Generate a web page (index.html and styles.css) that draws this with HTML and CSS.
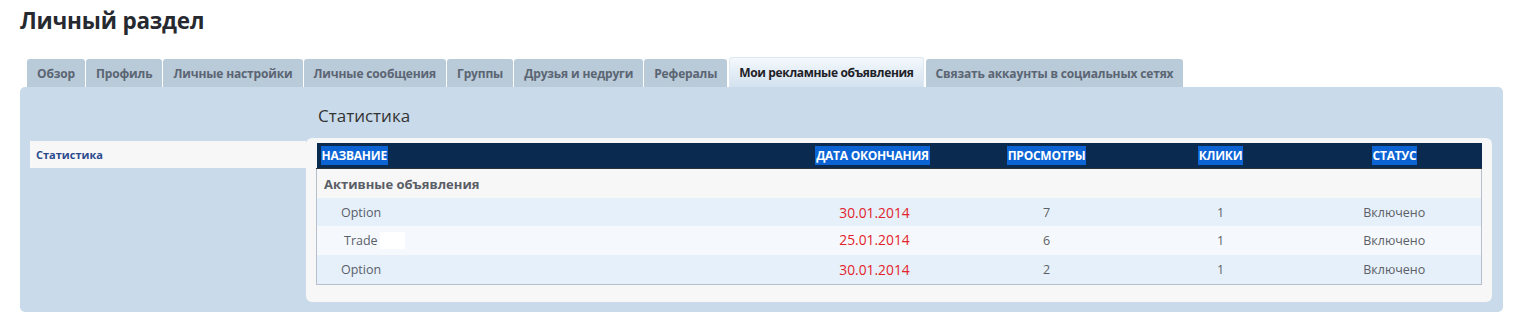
FILE: index.html
```html
<!DOCTYPE html>
<html lang="ru">
<head>
  <meta charset="UTF-8" />
  <title>Личный раздел</title>
  <link rel="stylesheet" href="styles.css">
</head>
<body>
  <h1 class="page-title">Личный раздел</h1>

  <ul class="tabs">
    <li class="tab">Обзор</li>
    <li class="tab">Профиль</li>
    <li class="tab">Личные настройки</li>
    <li class="tab">Личные сообщения</li>
    <li class="tab">Группы</li>
    <li class="tab">Друзья и недруги</li>
    <li class="tab">Рефералы</li>
    <li class="tab active">Мои рекламные объявления</li>
    <li class="tab">Связать аккаунты в социальных сетях</li>
  </ul>

  <div class="panel">
    <div class="sidebar">
      <div class="side-item">Статистика</div>
    </div>

    <div class="main">
      <h2 class="section-title">Статистика</h2>
      <div class="card">
        <table class="stats">
          <colgroup>
            <col class="c-name">
            <col class="c-date">
            <col class="c-num">
            <col class="c-num">
            <col class="c-num">
          </colgroup>
          <thead>
            <tr>
              <th class="left"><span class="sel">НАЗВАНИЕ</span></th>
              <th><span class="sel">ДАТА ОКОНЧАНИЯ</span></th>
              <th><span class="sel">ПРОСМОТРЫ</span></th>
              <th><span class="sel">КЛИКИ</span></th>
              <th><span class="sel">СТАТУС</span></th>
            </tr>
          </thead>
          <tbody>
            <tr class="group">
              <td colspan="5">Активные объявления</td>
            </tr>
            <tr class="odd short">
              <td class="name">Option</td>
              <td class="date">30.01.2014</td>
              <td>7</td>
              <td>1</td>
              <td>Включено</td>
            </tr>
            <tr class="even">
              <td class="name trade">Trade<span class="blank"></span></td>
              <td class="date up">25.01.2014</td>
              <td>6</td>
              <td>1</td>
              <td>Включено</td>
            </tr>
            <tr class="odd">
              <td class="name">Option</td>
              <td class="date">30.01.2014</td>
              <td>2</td>
              <td>1</td>
              <td>Включено</td>
            </tr>
          </tbody>
        </table>
      </div>
    </div>
  </div>
</body>
</html>
```

FILE: styles.css
```css
body {
  margin: 0;
  padding: 0 16px 0 20px;
  background: #ffffff;
  font-family: 'Open Sans', sans-serif;
  color: #555;
}

.page-title {
  margin: 0;
  padding-top: 5px;
  height: 52px;
  font-size: 22.5px;
  font-weight: 700;
  line-height: 32px;
  color: #262a30;
  letter-spacing: -0.2px;
}

.tabs {
  list-style: none;
  margin: 0 0 0 7px;
  padding: 0;
  display: flex;
  align-items: flex-end;
  height: 30px;
  gap: 1px;
}

.tab {
  height: 28px;
  padding: 0 10px;
  display: flex;
  align-items: center;
  background: #b9cad8;
  border-radius: 3px 3px 0 0;
  font-size: 12px;
  font-weight: 700;
  color: #5b6573;
  white-space: nowrap;
  letter-spacing: -0.15px;
}

.tab.active {
  height: 29px;
  margin: 0 1px;
  padding: 0 9px;
  background: linear-gradient(#f4f8fc, #d3e2ef);
  color: #1e2228;
  border: 1px solid #dde8f2;
  border-bottom: none;
  letter-spacing: -0.35px;
}

.panel {
  display: flex;
  background: #c9dbea;
  border-radius: 5px;
  padding: 0 11px 10px 10px;
}

.sidebar {
  width: 278px;
  padding-top: 54px;
}

.side-item {
  height: 27px;
  line-height: 27px;
  padding-left: 6px;
  background: #f7f7f7;
  font-size: 11px;
  font-weight: 700;
  color: #2b4a8e;
}

.main {
  flex: 1;
}

.section-title {
  margin: 0;
  padding: 17px 0 0 12px;
  height: 34px;
  font-size: 17px;
  font-weight: 400;
  line-height: 24px;
  color: #333;
}

.card {
  background: #f7f7f7;
  border-radius: 6px;
  padding: 5px 10px 17px 10px;
}

.stats {
  width: 100%;
  border-collapse: collapse;
  table-layout: fixed;
  font-size: 12.5px;
}

.c-name { width: 469px; }
.c-date { width: 174px; }
.c-num { width: 174px; }

.stats thead tr {
  background: #0a2a50;
}

.stats th {
  height: 25px;
  padding: 0;
  text-align: center;
  font-size: 12px;
  font-weight: 700;
  color: #ffffff;
  letter-spacing: -0.25px;
  border-bottom: 1px solid #2c323a;
}

.stats th.left {
  text-align: left;
  padding-left: 4px;
}

.sel {
  background: #0b63d4;
  padding: 1px 1px;
}

.stats tbody td {
  height: 29px;
  padding: 0;
  text-align: center;
  color: #5c6066;
}

.stats tr.short td {
  height: 28px;
}

.stats tbody tr {
  border-left: 1px solid #b8bfcc;
  border-right: 1px solid #b8bfcc;
}

.stats tbody tr:last-child {
  border-bottom: 1px solid #b8bfcc;
}

.stats tr.group td {
  text-align: left;
  padding-left: 7px;
  font-size: 13px;
  font-weight: 700;
  color: #5a5e66;
  background: #f7f7f7;
}

.stats tr.odd td { background: #e6f0fa; }
.stats tr.even td { background: #f5f9fd; }

.stats td.name {
  text-align: left;
  padding-left: 24px;
  color: #5a5e6a;
}

.stats td.trade {
  padding-left: 27px;
}

.blank {
  display: inline-block;
  width: 25px;
  height: 17px;
  margin-left: 2px;
  vertical-align: -4px;
  background: #ffffff;
}

.stats td.date {
  color: #e3222b;
  font-size: 13.8px;
  padding-left: 4px;
}

.stats td.date.up {
  vertical-align: top;
  padding-top: 4px;
  height: 25px;
}
```
